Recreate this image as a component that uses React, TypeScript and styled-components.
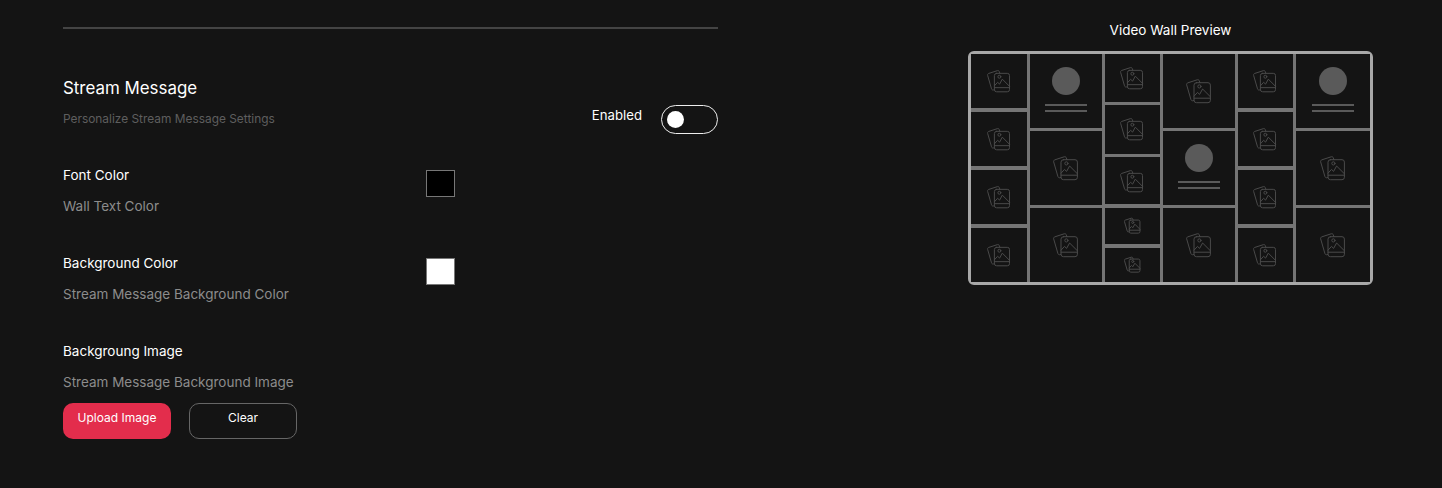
import React from "react";
import styled, { createGlobalStyle } from "styled-components";

const Global = createGlobalStyle`
  html, body { margin: 0; padding: 0; background: #141414; }
  body { font-family: Inter, "Liberation Sans", sans-serif; }
`;

const Page = styled.div`
  width: 1442px;
  height: 488px;
  overflow: hidden;
  background: #141414;
  display: flex;
  align-items: flex-start;
  padding-left: 63px;
  box-sizing: border-box;
`;

const Settings = styled.section`
  width: 655px;
  padding-top: 27px;
  flex: none;
`;

const Rule = styled.hr`
  margin: 0;
  border: 0;
  height: 2px;
  background: #444;
`;

const Header = styled.header`
  display: flex;
  justify-content: space-between;
  align-items: flex-start;
  margin-top: 47px;
`;

const Title = styled.h2`
  margin: 0;
  font-size: 16.9px;
  line-height: 24px;
  font-weight: 400;
  color: #fff;
`;

const Subtitle = styled.p`
  margin: 9px 0 0;
  font-size: 11.9px;
  line-height: 20px;
  color: #5e5e5e;
`;

const ToggleRow = styled.div`
  display: flex;
  align-items: center;
  gap: 19px;
  margin-top: 29px;
`;

const ToggleLabel = styled.span`
  font-size: 13.2px;
  line-height: 20px;
  color: #fff;
  position: relative;
  top: -5px;
`;

const Toggle = styled.span`
  width: 57px;
  height: 29px;
  box-sizing: border-box;
  border: 1px solid #eee;
  border-radius: 15px;
  display: flex;
  align-items: center;
  padding-left: 5px;
`;

const Knob = styled.span`
  width: 17px;
  height: 17px;
  border-radius: 50%;
  background: #fff;
`;

const Field = styled.div<{ $top: number }>`
  display: grid;
  grid-template-columns: 363px 29px;
  margin-top: ${(p) => p.$top}px;
`;

const Label = styled.div`
  font-size: 13.5px;
  line-height: 20px;
  color: #fff;
`;

const Hint = styled.div`
  margin-top: 11px;
  font-size: 13.5px;
  line-height: 20px;
  color: #8c8c8c;
`;

const Swatch = styled.div<{ $color: string; $top: number }>`
  width: 29px;
  height: 27px;
  box-sizing: border-box;
  margin-top: ${(p) => p.$top}px;
  background: ${(p) => p.$color};
  border: 1px solid #777;
`;

const Actions = styled.div`
  display: flex;
  gap: 18px;
  margin-top: 11px;
`;

const Button = styled.button<{ $primary?: boolean }>`
  width: 108px;
  height: 36px;
  padding: 0 0 7px;
  box-sizing: border-box;
  border-radius: 10px;
  font: 400 12px Inter, "Liberation Sans", sans-serif;
  color: #fff;
  background: ${(p) => (p.$primary ? "#e32d4c" : "transparent")};
  border: ${(p) => (p.$primary ? "0" : "1px solid #666")};
`;

const Preview = styled.aside`
  width: 405px;
  margin-left: 250px;
  padding-top: 20px;
  flex: none;
`;

const PreviewTitle = styled.div`
  text-align: center;
  font-size: 13.5px;
  line-height: 20px;
  color: #fff;
  margin-bottom: 11px;
`;

const Wall = styled.div`
  width: 405px;
  height: 234px;
  box-sizing: border-box;
  border: 3px solid #a8a8a8;
  border-radius: 6px;
  background: #757575;
  display: flex;
  gap: 3px;
`;

const Column = styled.div<{ $width: number }>`
  width: ${(p) => p.$width}px;
  flex: none;
  display: flex;
  flex-direction: column;
  gap: 3.5px;
`;

const Cell = styled.div<{ $grow?: number }>`
  flex: ${(p) => p.$grow ?? 1} 1 0;
  min-height: 0;
  background: #141414;
  display: flex;
  flex-direction: column;
  align-items: center;
  justify-content: center;
`;

const Avatar = styled.div`
  width: 28px;
  height: 28px;
  border-radius: 50%;
  background: #5a5a5a;
  margin-bottom: 5px;
`;

const TextLine = styled.div`
  width: 42px;
  height: 2px;
  background: #5a5a5a;
  margin-top: 4px;

  &:last-child {
    margin-bottom: 3px;
  }
`;

function PhotoIcon({ size }: { size: number }) {
  return (
    <svg width={size} height={size} viewBox="0 0 26 26" fill="none" stroke="#4a4a4a" strokeWidth={26 / size} strokeLinejoin="round" strokeLinecap="round">
      <path d="M8 22.4 L7 22.7 C6 23 5.2 22.5 4.9 21.5 L0.7 7 C0.4 6 0.9 5.1 1.9 4.8 L11.2 1.8 C12.2 1.5 13.1 2 13.4 3 L13.9 4.7" />
      <rect x="8" y="4.7" width="16.4" height="20" rx="2.4" />
      <path d="M8 20.2 H24.4" />
      <path d="M8 18.2 L11.5 14.4 L13.6 16.4 L16.6 11 L24.4 18.8" />
      <circle cx="13.4" cy="8.4" r="1.6" />
    </svg>
  );
}

function Photo({ size = 24, grow }: { size?: number; grow?: number }) {
  return (
    <Cell $grow={grow}>
      <PhotoIcon size={size} />
    </Cell>
  );
}

function Person() {
  return (
    <Cell>
      <Avatar />
      <TextLine />
      <TextLine />
    </Cell>
  );
}

export default function App() {
  return (
    <Page>
      <Global />
      <Settings>
        <Rule />
        <Header>
          <div>
            <Title>Stream Message</Title>
            <Subtitle>Personalize Stream Message Settings</Subtitle>
          </div>
          <ToggleRow>
            <ToggleLabel>Enabled</ToggleLabel>
            <Toggle>
              <Knob />
            </Toggle>
          </ToggleRow>
        </Header>
        <Field $top={31}>
          <div>
            <Label>Font Color</Label>
            <Hint>Wall Text Color</Hint>
          </div>
          <Swatch $color="#000" $top={5} />
        </Field>
        <Field $top={37}>
          <div>
            <Label>Background Color</Label>
            <Hint>Stream Message Background Color</Hint>
          </div>
          <Swatch $color="#fff" $top={5} />
        </Field>
        <Field $top={37}>
          <div>
            <Label>Backgroung Image</Label>
            <Hint>Stream Message Background Image</Hint>
          </div>
        </Field>
        <Actions>
          <Button $primary>Upload Image</Button>
          <Button>Clear</Button>
        </Actions>
      </Settings>
      <Preview>
        <PreviewTitle>Video Wall Preview</PreviewTitle>
        <Wall>
          <Column $width={55.5}>
            <Photo />
            <Photo />
            <Photo />
            <Photo />
          </Column>
          <Column $width={72.5}>
            <Person />
            <Photo size={26} />
            <Photo size={26} />
          </Column>
          <Column $width={54.5}>
            <Photo grow={47.7} />
            <Photo grow={48.3} />
            <Photo grow={47} />
            <Photo size={17} grow={36.5} />
            <Photo size={17} grow={34.3} />
          </Column>
          <Column $width={72.5}>
            <Photo size={26} />
            <Person />
            <Photo size={26} />
          </Column>
          <Column $width={54.7}>
            <Photo />
            <Photo />
            <Photo />
            <Photo />
          </Column>
          <Column $width={74.3}>
            <Person />
            <Photo size={26} />
            <Photo size={26} />
          </Column>
        </Wall>
      </Preview>
    </Page>
  );
}
